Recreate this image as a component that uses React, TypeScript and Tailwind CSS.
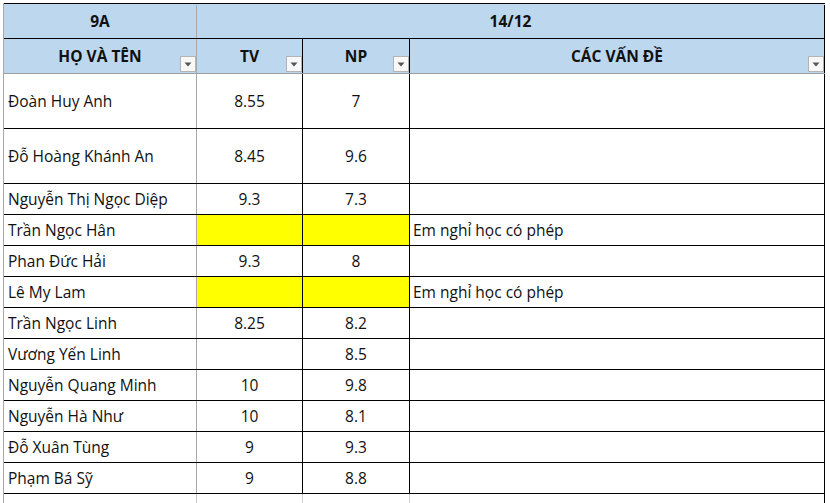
const rows = [
  { name: "Đoàn Huy Anh", tv: "8.55", np: "7", note: "", tall: true },
  { name: "Đỗ Hoàng Khánh An", tv: "8.45", np: "9.6", note: "", tall: true },
  { name: "Nguyễn Thị Ngọc Diệp", tv: "9.3", np: "7.3", note: "" },
  { name: "Trần Ngọc Hân", tv: "", np: "", note: "Em nghỉ học có phép", absent: true },
  { name: "Phan Đức Hải", tv: "9.3", np: "8", note: "" },
  { name: "Lê My Lam", tv: "", np: "", note: "Em nghỉ học có phép", absent: true },
  { name: "Trần Ngọc Linh", tv: "8.25", np: "8.2", note: "" },
  { name: "Vương Yến Linh", tv: "", np: "8.5", note: "" },
  { name: "Nguyễn Quang Minh", tv: "10", np: "9.8", note: "" },
  { name: "Nguyễn Hà Như", tv: "10", np: "8.1", note: "" },
  { name: "Đỗ Xuân Tùng", tv: "9", np: "9.3", note: "" },
  { name: "Phạm Bá Sỹ", tv: "9", np: "8.8", note: "" },
];

function FilterButton() {
  return (
    <span className="absolute right-[0px] bottom-[1px] flex h-[16px] w-[16px] items-center justify-center border border-[#b4b4b4] bg-[#f8f8f8]">
      <svg width="8" height="5" viewBox="0 0 8 5">
        <path d="M0.5 0.5 L7.5 0.5 L4 4.5 Z" fill="#555" />
      </svg>
    </span>
  );
}

export default function App() {
  return (
    <div
      className="h-[503px] w-[830px] overflow-hidden bg-white pl-[3px] pt-[3px] text-[15.5px] text-[#111]"
      style={{ fontFamily: "'Open Sans', 'Liberation Sans', sans-serif" }}
    >
      <div className="w-[822px] border-l border-[#a8a8a8]">
        {/* header row 1 */}
        <div className="flex h-[36px] border-y border-black bg-[#bdd7ee] pt-[1px] font-bold">
          <div className="flex w-[193px] items-center justify-center border-r border-[#a8a8a8]">9A</div>
          <div className="flex w-[628px] items-center justify-center border-r border-black">14/12</div>
        </div>
        {/* header row 2 */}
        <div className="flex h-[35px] border-b border-[#9e9e9e] bg-[#bdd7ee] font-bold">
          <div className="relative flex w-[193px] items-center justify-center border-r border-[#a8a8a8] pt-[2px]">
            HỌ VÀ TÊN
            <FilterButton />
          </div>
          <div className="relative flex w-[106px] items-center justify-center border-r border-black pt-[2px]">
            TV
            <FilterButton />
          </div>
          <div className="relative flex w-[107px] items-center justify-center border-r border-black pt-[2px]">
            NP
            <FilterButton />
          </div>
          <div className="relative flex w-[415px] items-center justify-center border-r border-black pt-[2px]">
            CÁC VẤN ĐỀ
            <FilterButton />
          </div>
        </div>
        {rows.map((r) => (
          <div key={r.name} className={`flex border-b border-black ${r.tall ? "h-[55px]" : "h-[31px]"}`}>
            <div className="flex w-[193px] items-center border-r border-[#a8a8a8] pl-[4px] pt-[2px]">{r.name}</div>
            <div
              className={`flex w-[106px] items-center justify-center border-r border-black pt-[2px] ${r.absent ? "bg-[#ffff00]" : ""}`}
            >
              {r.tv}
            </div>
            <div
              className={`flex w-[107px] items-center justify-center border-r border-black pt-[2px] ${r.absent ? "bg-[#ffff00]" : ""}`}
            >
              {r.np}
            </div>
            <div className="flex w-[415px] items-center border-r border-black pl-[3px] pt-[2px]">{r.note}</div>
          </div>
        ))}
        <div className="flex h-[20px]">
          <div className="w-[193px] border-r border-[#c8c8c8]" />
          <div className="w-[106px] border-r border-[#d0d0d0]" />
          <div className="w-[107px] border-r border-[#d0d0d0]" />
          <div className="w-[415px] border-r border-black" />
        </div>
      </div>
    </div>
  );
}
